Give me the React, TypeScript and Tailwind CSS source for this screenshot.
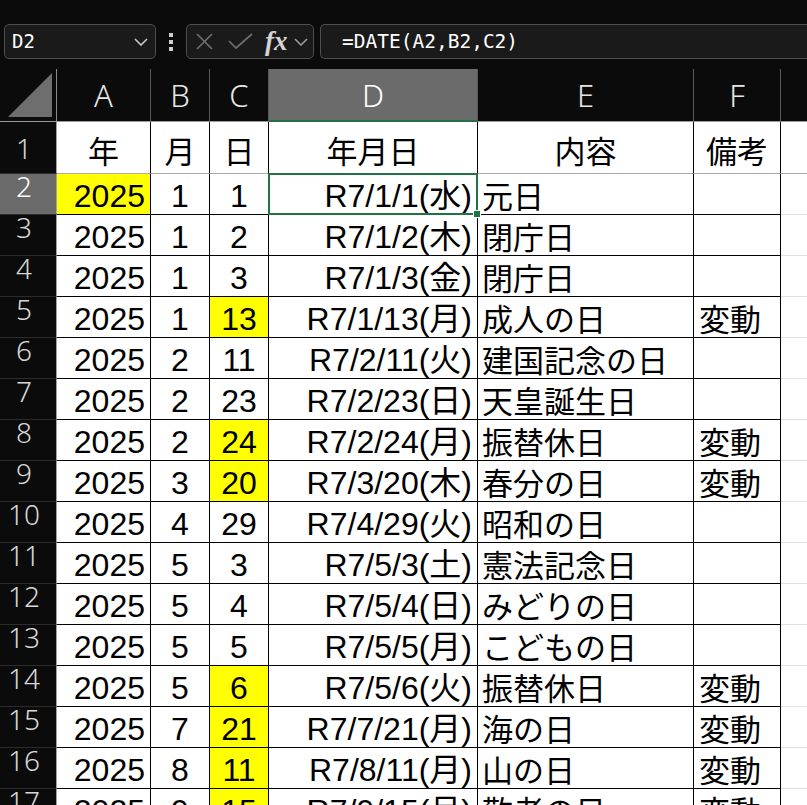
import clsx from "clsx";

type Holiday = {
  m: number;
  d: number;
  date: string;
  name: string;
  note: string;
  mark?: boolean;
};

const holidays: Holiday[] = [
  { m: 1, d: 1, date: "R7/1/1(水)", name: "元日", note: "" },
  { m: 1, d: 2, date: "R7/1/2(木)", name: "閉庁日", note: "" },
  { m: 1, d: 3, date: "R7/1/3(金)", name: "閉庁日", note: "" },
  { m: 1, d: 13, date: "R7/1/13(月)", name: "成人の日", note: "変動", mark: true },
  { m: 2, d: 11, date: "R7/2/11(火)", name: "建国記念の日", note: "" },
  { m: 2, d: 23, date: "R7/2/23(日)", name: "天皇誕生日", note: "" },
  { m: 2, d: 24, date: "R7/2/24(月)", name: "振替休日", note: "変動", mark: true },
  { m: 3, d: 20, date: "R7/3/20(木)", name: "春分の日", note: "変動", mark: true },
  { m: 4, d: 29, date: "R7/4/29(火)", name: "昭和の日", note: "" },
  { m: 5, d: 3, date: "R7/5/3(土)", name: "憲法記念日", note: "" },
  { m: 5, d: 4, date: "R7/5/4(日)", name: "みどりの日", note: "" },
  { m: 5, d: 5, date: "R7/5/5(月)", name: "こどもの日", note: "" },
  { m: 5, d: 6, date: "R7/5/6(火)", name: "振替休日", note: "変動", mark: true },
  { m: 7, d: 21, date: "R7/7/21(月)", name: "海の日", note: "変動", mark: true },
  { m: 8, d: 11, date: "R7/8/11(月)", name: "山の日", note: "変動", mark: true },
  { m: 9, d: 15, date: "R7/9/15(月)", name: "敬老の日", note: "変動", mark: true },
];

const widths = ["w-[94px]", "w-[59px]", "w-[59px]", "w-[209px]", "w-[216px]", "w-[87px]"];
const letters = ["A", "B", "C", "D", "E", "F"];
const titles = ["年", "月", "日", "年月日", "内容", "備考"];

const latin = "font-['Liberation_Sans','Noto_Sans_CJK_JP',sans-serif] text-[32px]";
const jp = "font-['Noto_Sans_CJK_JP',sans-serif] text-[31px]";
const ui = "font-['Noto_Sans','Noto_Sans_CJK_JP',sans-serif] font-light";

const cellBase = "flex shrink-0 border-r border-b border-r-black leading-none text-black";

const Chevron = ({ color }: { color: string }) => (
  <svg width="14" height="8" viewBox="0 0 14 8" fill="none" stroke={color} strokeWidth="1.6">
    <polyline points="1,1 7,7 13,1" />
  </svg>
);

const TopBar = () => (
  <div className="flex h-[69px] items-start pl-[4px] pt-[24px]">
    <div className="flex h-[35px] w-[152px] shrink-0 items-center justify-between rounded-[5px] border border-[#4e4e4e] bg-[#1a1a1a] pl-[7px] pr-[7px]">
      <span className="font-['DejaVu_Sans_Mono',monospace] text-[19px] font-light text-white">D2</span>
      <Chevron color="#c8c8c8" />
    </div>

    <div className="flex h-[35px] w-[30px] shrink-0 flex-col items-center justify-center gap-[3px]">
      <span className="size-[4px] bg-[#cfcfcf]" />
      <span className="size-[4px] bg-[#cfcfcf]" />
      <span className="size-[4px] bg-[#cfcfcf]" />
    </div>

    <div className="flex h-[35px] w-[128px] shrink-0 items-center rounded-[5px] border border-[#4e4e4e] bg-[#1a1a1a] pl-[9px]">
      <svg width="17" height="17" viewBox="0 0 17 17" stroke="#6e6e6e" strokeWidth="1.7">
        <line x1="1" y1="1" x2="16" y2="16" />
        <line x1="16" y1="1" x2="1" y2="16" />
      </svg>
      <svg className="ml-[15px]" width="25" height="17" viewBox="0 0 25 17" fill="none" stroke="#6e6e6e" strokeWidth="1.7">
        <polyline points="1,8 8,15 24,1" />
      </svg>
      <span className="ml-[12px] font-['Liberation_Serif',serif] text-[27px] font-bold italic leading-none text-[#d4d4d4]">
        fx
      </span>
      <span className="ml-[6px]">
        <Chevron color="#9a9a9a" />
      </span>
    </div>

    <div className="ml-[6px] flex h-[35px] flex-1 items-center rounded-l-[5px] border border-r-0 border-[#4e4e4e] bg-[#1a1a1a] pl-[21px]">
      <span className="font-['DejaVu_Sans_Mono',monospace] text-[19.5px] text-white">=DATE(A2,B2,C2)</span>
    </div>
  </div>
);

const ColumnHeader = () => (
  <div className="flex h-[53px]">
    <div className="w-[57px] shrink-0 border-r border-b border-r-[#8a8a8a] border-b-[#9a9a9a]">
      <svg width="56" height="52" viewBox="0 0 56 52">
        <polygon points="8,48 52,4 52,48" fill="#6e6e6e" />
      </svg>
    </div>
    {letters.map((l, i) => (
      <div
        key={l}
        className={clsx(
          "flex shrink-0 items-center justify-center border-r border-b border-r-[#5a5a5a] text-[31px] leading-none",
          ui,
          widths[i],
          i === 3
            ? "border-b-[#217346] bg-[#6b6b6b] text-white shadow-[inset_0_-1px_0_#217346]"
            : "border-b-[#9a9a9a] text-[#e6e6e6]"
        )}
      >
        {l}
      </div>
    ))}
    <div className="flex-1 border-b border-[#9a9a9a]" />
  </div>
);

const RowHead = ({ n, active, tall }: { n: number; active?: boolean; tall?: boolean }) => (
  <div
    className={clsx(
      "flex w-[57px] shrink-0 justify-center border-r border-b border-r-[#a0a0a0] border-b-[#2c2c2c] pr-[8px] text-[28px]",
      ui,
      active ? "bg-[#6b6b6b] text-white" : "bg-[#0b0b0b] text-[#d8d8d8]",
      tall ? "items-center leading-none" : "items-start leading-[24px]"
    )}
  >
    {n}
  </div>
);

const TitleRow = () => (
  <div className="flex h-[52px]">
    <RowHead n={1} tall />
    {titles.map((t, i) => (
      <div
        key={t}
        className={clsx(cellBase, jp, widths[i], "items-center justify-center border-b-[#ababab] pt-[4px]")}
      >
        {t}
      </div>
    ))}
    <div className="flex-1 border-b border-[#ababab]" />
  </div>
);

const DataRow = ({ h, n }: { h: Holiday; n: number }) => {
  const selected = n === 2;
  return (
    <div className="flex h-[41px]">
      <RowHead n={n} active={selected} />
      <div
        className={clsx(cellBase, latin, widths[0], "items-end justify-end pb-[2px] pr-[5px]", selected && "bg-[#ffff00]")}
      >
        2025
      </div>
      <div className={clsx(cellBase, latin, widths[1], "items-end justify-center pb-[2px]")}>{h.m}</div>
      <div
        className={clsx(cellBase, latin, widths[2], "items-end justify-center pb-[2px]", h.mark && "bg-[#ffff00]")}
      >
        {h.d}
      </div>
      <div className={clsx(cellBase, latin, widths[3], "relative items-end justify-end pb-[2px] pr-[5px]")}>
        {h.date}
        {selected && (
          <div className="absolute -top-px -left-px -right-px -bottom-px z-10 border-2 border-[#217346]">
            <div className="absolute right-[-4px] bottom-[-4px] size-[6px] bg-[#217346] outline outline-1 outline-white" />
          </div>
        )}
      </div>
      <div className={clsx(cellBase, jp, widths[4], "items-end pb-[4px] pl-[4px]")}>{h.name}</div>
      <div className={clsx(cellBase, jp, widths[5], "items-end pb-[4px] pl-[5px]")}>{h.note}</div>
      <div className="flex-1 border-b border-[#e1e1e1]" />
    </div>
  );
};

export default function App() {
  return (
    <div className="h-[805px] w-[807px] overflow-hidden bg-[#0b0b0b]">
      <TopBar />
      <ColumnHeader />
      <div className="bg-white">
        <TitleRow />
        {holidays.map((h, i) => (
          <DataRow key={h.date} h={h} n={i + 2} />
        ))}
      </div>
    </div>
  );
}
